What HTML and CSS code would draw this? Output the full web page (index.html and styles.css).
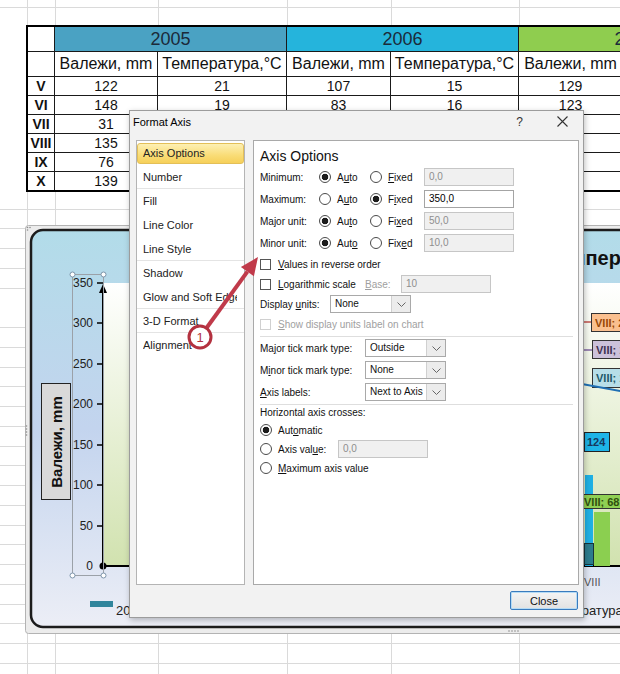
FILE: index.html
```html
<!DOCTYPE html>
<html lang="en">
<head>
<meta charset="UTF-8">
<meta name="viewport" content="width=device-width, initial-scale=1.0">
<title>Format Axis</title>
<link rel="stylesheet" href="styles.css">
</head>
<body>

<div class="sheet">
    <div class="top-row"></div>
    <table class="data">
        <colgroup>
            <col style="width:27px"><col style="width:103px"><col style="width:129px"><col style="width:104px"><col style="width:128px"><col style="width:104px"><col style="width:128px">
        </colgroup>
        <tr class="years">
            <td></td>
            <td colspan="2" class="y2005">2005</td>
            <td colspan="2" class="y2006">2006</td>
            <td colspan="2" class="y2007">2007</td>
        </tr>
        <tr class="heads">
            <td></td>
            <td>Валежи, mm</td><td>Температура,°C</td>
            <td>Валежи, mm</td><td>Температура,°C</td>
            <td>Валежи, mm</td><td>Температура,°C</td>
        </tr>
        <tr><th>V</th><td>122</td><td>21</td><td>107</td><td>15</td><td>129</td><td></td></tr>
        <tr><th>VI</th><td>148</td><td>19</td><td>83</td><td>16</td><td>123</td><td></td></tr>
        <tr><th>VII</th><td>31</td><td></td><td></td><td></td><td></td><td></td></tr>
        <tr><th>VIII</th><td>135</td><td></td><td></td><td></td><td></td><td></td></tr>
        <tr><th>IX</th><td>76</td><td></td><td></td><td></td><td></td><td></td></tr>
        <tr class="last"><th>X</th><td>139</td><td></td><td></td><td></td><td></td><td></td></tr>
    </table>
    <div class="rows"></div>
</div>

<!-- chart object on the sheet -->
<svg class="chart" width="620" height="412" viewBox="0 0 620 412">
    <defs>
        <linearGradient id="chartBg" x1="0" y1="0" x2="0" y2="1">
            <stop offset="0" stop-color="#b2dce9"/>
            <stop offset="0.5" stop-color="#c3d4ee"/>
            <stop offset="1" stop-color="#eceef6"/>
        </linearGradient>
        <linearGradient id="plotBg" x1="0" y1="0" x2="0" y2="1">
            <stop offset="0" stop-color="#ffffff"/>
            <stop offset="1" stop-color="#d1e2af"/>
        </linearGradient>
    </defs>
    <rect x="0.5" y="0.5" width="640" height="408" rx="3" fill="#ececec" stroke="#b3b3b3"/>
    <g fill="#8c8c8c">
        <circle cx="2.5" cy="2.5" r="0.8"/><circle cx="5" cy="2.5" r="0.8"/><circle cx="2.5" cy="5" r="0.8"/>
        <circle cx="1.5" cy="201" r="0.8"/><circle cx="1.5" cy="204" r="0.8"/><circle cx="1.5" cy="207" r="0.8"/><circle cx="1.5" cy="210" r="0.8"/>
        <circle cx="484" cy="406" r="0.8"/><circle cx="487" cy="406" r="0.8"/><circle cx="490" cy="406" r="0.8"/><circle cx="493" cy="406" r="0.8"/>
    </g>
    <rect x="6" y="5" width="640" height="397" rx="12" fill="url(#chartBg)" stroke="#1c1c1c" stroke-width="2.5"/>
    <rect x="78" y="58" width="560" height="283" fill="url(#plotBg)"/>

    <text class="c-title" x="525" y="40">температура</text>

    <!-- value axis -->
    <g stroke="#000" stroke-width="1.5">
        <line x1="72" y1="58" x2="78" y2="58"/>
        <line x1="72" y1="98" x2="78" y2="98"/>
        <line x1="72" y1="139" x2="78" y2="139"/>
        <line x1="72" y1="179" x2="78" y2="179"/>
        <line x1="72" y1="220" x2="78" y2="220"/>
        <line x1="72" y1="260" x2="78" y2="260"/>
        <line x1="72" y1="301" x2="78" y2="301"/>
    </g>
    <g class="c-tick" text-anchor="end">
        <text x="68" y="62">350</text>
        <text x="68" y="102">300</text>
        <text x="68" y="143">250</text>
        <text x="68" y="183">200</text>
        <text x="68" y="224">150</text>
        <text x="68" y="264">100</text>
        <text x="68" y="305">50</text>
        <text x="68" y="345">0</text>
    </g>
    <line x1="78" y1="64" x2="78" y2="341" stroke="#000" stroke-width="2"/>
    <polygon points="78,59 74,68 82,68" fill="#000"/>
    <line x1="78" y1="341" x2="640" y2="341" stroke="#000" stroke-width="2"/>
    <circle cx="78" cy="341" r="3.5" fill="#000"/>

    <rect x="47.5" y="49.5" width="31" height="301" fill="none" stroke="#9ba1a8"/>
    <g fill="#fff" stroke="#7d95ab">
        <circle cx="47.5" cy="49.5" r="2.5"/><circle cx="78.5" cy="49.5" r="2.5"/>
        <circle cx="47.5" cy="350.5" r="2.5"/><circle cx="78.5" cy="350.5" r="2.5"/>
    </g>

    <rect x="16.5" y="158.5" width="29" height="116" fill="#d9d9d9" stroke="#222"/>
    <text class="c-axis" x="31" y="217" transform="rotate(-90 31 217)" text-anchor="middle" dominant-baseline="central">Валежи, mm</text>

    <!-- series seen to the right of the dialog -->
    <line x1="557" y1="97" x2="566" y2="97" stroke="#c0504d" stroke-width="1.5"/>
    <rect x="566.5" y="88.5" width="40" height="18" fill="#fac08f" stroke="#333"/>
    <text class="c-lbl" x="570" y="101.5" fill="#984807">VIII; 21</text>
    <line x1="557" y1="125" x2="567" y2="125" stroke="#8064a2" stroke-width="1.5"/>
    <rect x="567.5" y="115.5" width="40" height="18" fill="#ccc1da" stroke="#333"/>
    <text class="c-lbl" x="571" y="128.5" fill="#403152">VIII; 19</text>
    <rect x="567.5" y="143.5" width="40" height="19" fill="#b7dee8" stroke="#333"/>
    <text class="c-lbl" x="571" y="157" fill="#215968">VIII; 15</text>
    <line x1="557" y1="159" x2="600" y2="167" stroke="#1f6fb4" stroke-width="2"/>

    <rect x="560" y="250" width="8" height="91" fill="#1fb0e4"/>
    <rect x="569" y="287" width="16" height="54" fill="#8bcf50"/>
    <rect x="559.5" y="318.5" width="9" height="21" fill="#2c7c8e" stroke="#17343a"/>
    <rect x="559.5" y="207.5" width="25" height="19" fill="#1eb4e8" stroke="#222"/>
    <text class="c-lbl" x="562" y="221" fill="#17375e">124</text>
    <rect x="557.5" y="269.5" width="48" height="14" fill="#8fd053" stroke="#333"/>
    <text class="c-lbl" x="559" y="280.5" fill="#2f4f0f">VIII; 68</text>

    <text class="c-cat" x="559" y="361">VIII</text>

    <rect x="65" y="376" width="23" height="6" fill="#31859c"/>
    <text class="c-leg" x="91" y="390">2005 Валежи, mm</text>
    <text class="c-leg" x="519" y="390">Температура, °C</text>
</svg>

<div class="dialog">
    <div class="dlg-title">
        <span class="dlg-name">Format Axis</span>
        <span class="dlg-help">?</span>
        <svg class="dlg-x" width="11" height="11" viewBox="0 0 11 11">
            <path d="M0.5 0.5 L10.5 10.5 M10.5 0.5 L0.5 10.5" stroke="#333" stroke-width="1.1" fill="none"/>
        </svg>
    </div>

    <div class="dlg-body">
        <ul class="nav">
            <li class="active"><span>Axis Options</span></li>
            <li class="sep"><span>Number</span></li>
            <li><span>Fill</span></li>
            <li><span>Line Color</span></li>
            <li class="sep"><span>Line Style</span></li>
            <li><span>Shadow</span></li>
            <li class="sep"><span>Glow and Soft Edges</span></li>
            <li class="sep"><span>3-D Format</span></li>
            <li><span>Alignment</span></li>
        </ul>

        <div class="pane">
            <h3>Axis Options</h3>

            <div class="opt">
                <span>Minimum:</span>
                <span class="radio on"><span>A<u>u</u>to</span></span>
                <span class="radio"><span><u>F</u>ixed</span></span>
                <span class="field">0,0</span>
            </div>
            <div class="opt">
                <span>Maximum:</span>
                <span class="radio"><span>A<u>u</u>to</span></span>
                <span class="radio on"><span>F<u>i</u>xed</span></span>
                <span class="field on">350,0</span>
            </div>
            <div class="opt">
                <span>Major unit:</span>
                <span class="radio on"><span>Au<u>t</u>o</span></span>
                <span class="radio"><span>Fi<u>x</u>ed</span></span>
                <span class="field">50,0</span>
            </div>
            <div class="opt">
                <span>Minor unit:</span>
                <span class="radio on"><span>Aut<u>o</u></span></span>
                <span class="radio"><span>Fix<u>e</u>d</span></span>
                <span class="field">10,0</span>
            </div>

            <div class="chk-row">
                <span class="check"><span><u>V</u>alues in reverse order</span></span>
            </div>
            <div class="chk-row log-row">
                <span class="check"><span><u>L</u>ogarithmic scale</span></span>
                <span class="muted"><u>B</u>ase:</span>
                <span class="field">10</span>
            </div>
            <div class="chk-row unit-row">
                <span>Display <u>u</u>nits:</span>
                <span class="select"><span class="val">None</span><span class="btn"><svg width="9" height="5" viewBox="0 0 9 5"><path d="M0.5 0.5 L4.5 4.5 L8.5 0.5" stroke="#666" fill="none"/></svg></span></span>
            </div>
            <div class="chk-row">
                <span class="check off"><span><u>S</u>how display units label on chart</span></span>
            </div>

            <div class="rule first"></div>

            <div class="sel-row">
                <span>Ma<u>j</u>or tick mark type:</span>
                <span class="select"><span class="val">Outside</span><span class="btn"><svg width="9" height="5" viewBox="0 0 9 5"><path d="M0.5 0.5 L4.5 4.5 L8.5 0.5" stroke="#666" fill="none"/></svg></span></span>
            </div>
            <div class="sel-row">
                <span>M<u>i</u>nor tick mark type:</span>
                <span class="select"><span class="val">None</span><span class="btn"><svg width="9" height="5" viewBox="0 0 9 5"><path d="M0.5 0.5 L4.5 4.5 L8.5 0.5" stroke="#666" fill="none"/></svg></span></span>
            </div>
            <div class="sel-row">
                <span><u>A</u>xis labels:</span>
                <span class="select"><span class="val">Next to Axis</span><span class="btn"><svg width="9" height="5" viewBox="0 0 9 5"><path d="M0.5 0.5 L4.5 4.5 L8.5 0.5" stroke="#666" fill="none"/></svg></span></span>
            </div>

            <div class="rule"></div>

            <div class="cross-label">Horizontal axis crosses:</div>
            <div class="cross-row"><span class="radio on"><span>Aut<u>o</u>matic</span></span></div>
            <div class="cross-row value-row">
                <span class="radio"><span>Axis val<u>u</u>e:</span></span>
                <span class="field">0,0</span>
            </div>
            <div class="cross-row"><span class="radio"><span><u>M</u>aximum axis value</span></span></div>
        </div>
    </div>

    <div class="dlg-foot">
        <button class="btn-close">Close</button>
    </div>
</div>

<!-- callout drawn over the screenshot -->
<svg class="callout" width="620" height="674" viewBox="0 0 620 674">
    <line x1="206.5" y1="328" x2="247.4" y2="271.6" stroke="#c03a4a" stroke-width="4"/>
    <polygon points="258,257 253.9,276.3 240.9,266.9" fill="#c03a4a"/>
    <circle cx="200" cy="337" r="11" fill="#fff" stroke="#b3313f" stroke-width="3"/>
    <text x="200" y="342" text-anchor="middle" class="callout-num">1</text>
</svg>

</body>
</html>
```

FILE: styles.css
```css
body {
    margin: 0;
    width: 620px;
    height: 674px;
    overflow: hidden;
    position: relative;
    background-color: #fff;
    font-family: "Liberation Sans", Arial, sans-serif;
    color: #000;
}

/* spreadsheet */
.sheet {
    height: 674px;
    background-image:
        linear-gradient(#dadada, #dadada),
        linear-gradient(#dadada, #dadada),
        linear-gradient(#dadada, #dadada),
        linear-gradient(#dadada, #dadada),
        linear-gradient(#dadada, #dadada),
        linear-gradient(#dadada, #dadada);
    background-size: 1px 100%;
    background-repeat: no-repeat;
    background-position: 27px 0, 55px 0, 158px 0, 287px 0, 391px 0, 519px 0;
}
.top-row {
    height: 7px;
    border-bottom: 1px solid #dadada;
    margin-bottom: 17px;
}
.data {
    margin-left: 26px;
    width: 727px;
    border: 2px solid #000;
    border-collapse: separate;
    border-spacing: 0;
    table-layout: fixed;
    background-color: #fff;
}
.data td,
.data th {
    box-sizing: border-box;
    height: 19px;
    padding: 0;
    border-right: 1px solid #1a1a1a;
    border-bottom: 1px solid #1a1a1a;
    text-align: center;
    font-size: 14px;
    color: #111;
    white-space: nowrap;
    overflow: hidden;
}
.data th {
    font-weight: bold;
}
.data tr.last td,
.data tr.last th {
    height: 18px;
    border-bottom: none;
}
.data tr.years td {
    height: 25px;
    font-size: 18px;
    color: #1b2a3a;
}
.data tr.heads td {
    height: 25px;
    font-size: 16px;
}
.y2005 { background-color: #4aa2c3; }
.y2006 { background-color: #25b4dc; }
.y2007 { background-color: #8fcd4f; }
.rows {
    height: 482px;
    background-image: repeating-linear-gradient(to bottom, transparent 0, transparent 18.75px, #dadada 18.75px, #dadada 19.75px);
    background-position: 0 -2px;
}

/* chart */
.chart {
    position: absolute;
    left: 25px;
    top: 225px;
}
.chart text {
    font-family: "Liberation Sans", Arial, sans-serif;
}
.c-title { font-size: 20px; font-weight: bold; fill: #111; }
.c-tick { font-size: 12px; fill: #222; }
.c-axis { font-size: 15px; font-weight: bold; fill: #111; }
.c-lbl { font-size: 11px; font-weight: bold; }
.c-cat { font-size: 11px; fill: #555; }
.c-leg { font-size: 13px; fill: #222; }

/* dialog */
.dialog {
    position: absolute;
    left: 129px;
    top: 110px;
    width: 455px;
    height: 508px;
    box-sizing: border-box;
    border: 1px solid #9c9c9c;
    background-color: #f2f2f2;
    box-shadow: 1px 2px 6px rgba(0,0,0,0.25);
    font-size: 11px;
}
.dlg-title {
    height: 21px;
    display: flex;
    align-items: center;
    padding: 0 15px 0 3px;
}
.dlg-name {
    flex: 1;
    font-size: 11px;
}
.dlg-help {
    font-size: 12px;
    color: #333;
    margin-right: 34px;
}
.dlg-body {
    display: flex;
    gap: 8px;
    height: 445px;
    margin: 8px 4px 0 6px;
}
.nav {
    list-style: none;
    margin: 0;
    padding: 0;
    width: 109px;
    box-sizing: border-box;
    border: 1px solid #b4b4b4;
    background-color: #fff;
}
.nav li {
    box-sizing: border-box;
    height: 24px;
    line-height: 24px;
    padding-left: 6px;
    color: #222;
}
.nav li span {
    display: block;
    margin-right: 7px;
    white-space: nowrap;
    overflow: hidden;
}
.nav li.sep {
    border-bottom: 1px solid #e4e4e4;
}
.nav li.active {
    height: 21px;
    line-height: 19px;
    margin: 2px 0 1px;
    padding-left: 5px;
    border: 1px solid #e3bf58;
    border-radius: 3px;
    background: linear-gradient(#fdf0b4, #f9dc76 60%, #f6d05a);
}
.pane {
    width: 326px;
    box-sizing: border-box;
    border: 1px solid #a9a9a9;
    background-color: #fff;
    padding: 6px 5px 0 6px;
    font-size: 10px;
    color: #111;
}
.pane h3 {
    margin: 0;
    height: 19px;
    line-height: 19px;
    font-size: 14px;
    font-weight: normal;
}
.opt {
    display: grid;
    grid-template-columns: 59px 51px 54px 90px;
    align-items: center;
    height: 22px;
}
.radio {
    display: flex;
    align-items: center;
    gap: 6px;
    white-space: nowrap;
}
.radio::before {
    content: "";
    flex: none;
    width: 12px;
    height: 12px;
    box-sizing: border-box;
    border: 1px solid #4a4a4a;
    border-radius: 50%;
    background-color: #fff;
}
.radio.on::before {
    background: radial-gradient(circle, #1c1c1c 0, #1c1c1c 3px, #fff 3.6px);
}
.field {
    display: block;
    width: 90px;
    height: 18px;
    box-sizing: border-box;
    border: 1px solid #c6c6c6;
    background-color: #f0f0f0;
    color: #8e8e8e;
    padding-left: 4px;
    line-height: 16px;
}
.field.on {
    background-color: #fff;
    border-color: #a4a4a4;
    color: #000;
}
.chk-row {
    display: flex;
    align-items: center;
    height: 20px;
}
.check {
    display: flex;
    align-items: center;
    gap: 7px;
    white-space: nowrap;
}
.check::before {
    content: "";
    flex: none;
    width: 11px;
    height: 11px;
    box-sizing: border-box;
    border: 1px solid #555;
    background-color: #fff;
}
.check.off {
    color: #a0a0a0;
}
.check.off::before {
    border-color: #d0d0d0;
}
.log-row {
    display: grid;
    grid-template-columns: 105px 36px 90px;
}
.muted {
    color: #a0a0a0;
}
.unit-row {
    display: grid;
    grid-template-columns: 70px 81px;
}
.select {
    display: flex;
    width: 81px;
    height: 18px;
    box-sizing: border-box;
    border: 1px solid #a9a9a9;
    background-color: #fff;
}
.select .val {
    flex: 1;
    padding-left: 4px;
    line-height: 16px;
    white-space: nowrap;
}
.select .btn {
    width: 18px;
    display: flex;
    align-items: center;
    justify-content: center;
    border-left: 1px solid #d0d0d0;
    background-color: #ececec;
}
.rule {
    height: 1px;
    background-color: #dedede;
    margin-top: 1px;
}
.rule.first {
    margin-top: 2px;
}
.sel-row {
    display: grid;
    grid-template-columns: 105px 81px;
    align-items: center;
    height: 22px;
}
.cross-label {
    height: 16px;
    line-height: 16px;
}
.cross-row {
    display: flex;
    align-items: center;
    height: 18px;
}
.value-row {
    display: grid;
    grid-template-columns: 78px 90px;
    height: 20px;
}
.dlg-foot {
    display: flex;
    justify-content: flex-end;
    padding: 6px 5px 0 0;
}
.btn-close {
    width: 68px;
    height: 19px;
    padding: 0;
    border: 1px solid #3a7bbd;
    border-radius: 2px;
    box-shadow: inset 0 0 0 1px #b5dbf5;
    background: linear-gradient(#f4f4f4, #e2e2e2);
    font-family: "Liberation Sans", Arial, sans-serif;
    font-size: 11px;
    color: #111;
}

/* callout */
.callout {
    position: absolute;
    left: 0;
    top: 0;
    pointer-events: none;
}
.callout-num {
    font-family: "Liberation Sans", Arial, sans-serif;
    font-size: 13px;
    fill: #b3313f;
}
```
